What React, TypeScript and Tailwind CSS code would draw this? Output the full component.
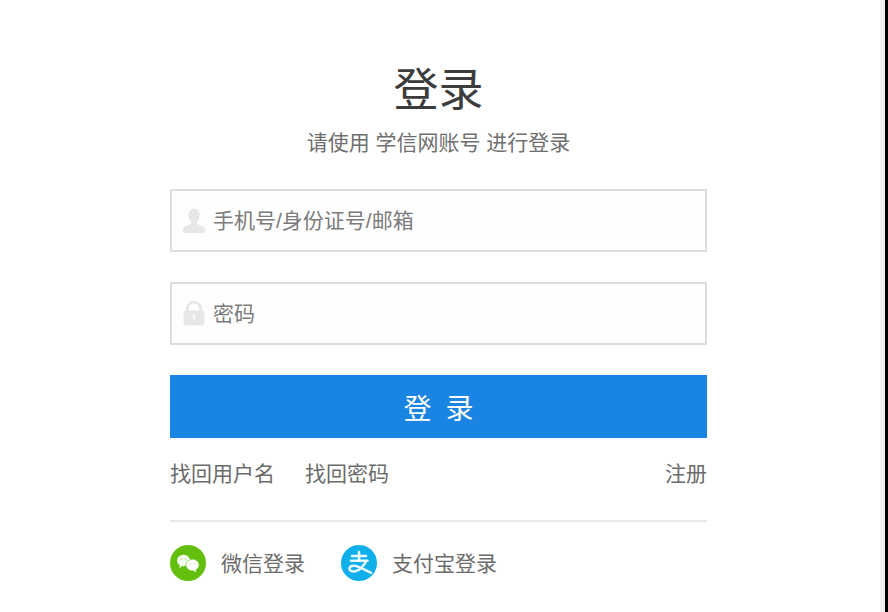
function UserIcon() {
  return (
    <svg width="22" height="25" viewBox="0 0 22 25" fill="#e7e7e7">
      <ellipse cx="11" cy="7.500" rx="5.800" ry="7" />
      <path d="M8 12h6v3c0 1 1.500 1.700 3.500 2.500 2.700 1 4.500 2 4.500 3.700V25H0v-3.800c0-1.700 1.800-2.700 4.500-3.700C6.500 16.700 8 16 8 15z" />
    </svg>
  );
}

function LockIcon() {
  return (
    <svg width="22" height="25" viewBox="0 0 22 25">
      <path
        d="M4.500 11V7.500a6.500 6.500 0 0 1 13 0V11"
        fill="none"
        stroke="#e7e7e7"
        strokeWidth="2.800"
      />
      <rect x="0.500" y="9.500" width="21" height="15" rx="3" fill="#e7e7e7" />
      <rect x="9.800" y="13.500" width="2.400" height="6" rx="1" fill="#fafafa" />
    </svg>
  );
}

function WechatIcon() {
  return (
    <svg width="36" height="36" viewBox="0 0 36 36">
      <circle cx="18" cy="18" r="18" fill="#62bf0e" />
      <ellipse cx="13.500" cy="15.500" rx="6.500" ry="5.800" fill="#f4fbee" />
      <path d="M10 19.500l-.8 3.400 3.400-2z" fill="#f4fbee" />
      <ellipse cx="22.500" cy="20" rx="6.500" ry="5.800" fill="#fff" stroke="#8fd24f" strokeWidth="0.800" />
      <path d="M25.500 24.500l1 2.700-3.400-1.700z" fill="#fff" />
      <circle cx="11.300" cy="14" r="0.900" fill="#c6e6a3" />
      <circle cx="15.700" cy="14" r="0.900" fill="#c6e6a3" />
      <circle cx="20.500" cy="19" r="0.800" fill="#c6e6a3" />
      <circle cx="24.500" cy="19" r="0.800" fill="#c6e6a3" />
    </svg>
  );
}

function AlipayIcon() {
  return (
    <svg width="36" height="36" viewBox="0 0 36 36" fill="none">
      <circle cx="18" cy="18" r="18" fill="#0fb0ea" />
      <g stroke="#fff" strokeWidth="2.500" strokeLinecap="round" strokeLinejoin="round" strokeOpacity="0.9">
        <path d="M11 11h14" />
        <path d="M18 7v8.500" />
        <path d="M10 15.800h16.500" />
        <path d="M25 16c-2 5-6.500 10-11.500 10.500-3 .3-5-.8-5-2.800 0-2 2-3.200 4.500-3 5 .3 10.500 4.500 17 7" />
      </g>
    </svg>
  );
}

function Field({ icon, label }: { icon: React.ReactNode; label: string }) {
  return (
    <div className="flex h-[63px] items-center border-2 border-[#dcdcdc] bg-[#fefefe] pl-[11px]">
      <span className="flex w-[22px] justify-center">{icon}</span>
      <span className="ml-[8px] text-[21px] text-[#7b7b7b]">{label}</span>
    </div>
  );
}

export default function App() {
  return (
    <div
      className="flex h-[612px] w-[888px] overflow-hidden bg-white"
      style={{ fontFamily: '"Liberation Sans", "Noto Sans CJK SC", sans-serif' }}
    >
      <div className="w-[880px] pt-[60px]">
        <div className="ml-[170px] w-[537px]">
          <h1 className="text-center text-[45px] leading-[62px] text-[#3c3c3c]">登录</h1>
          <p className="mt-[5px] text-center text-[21px] leading-[32px] text-[#6f6f6f]">
            请使用 学信网账号 进行登录
          </p>

          <div className="mt-[30px] flex flex-col gap-[30px]">
            <Field icon={<UserIcon />} label="手机号/身份证号/邮箱" />
            <Field icon={<LockIcon />} label="密码" />
          </div>

          <div className="mt-[30px] flex h-[63px] items-center justify-center bg-[#1a84e2] pt-[6px] text-[28px] tracking-[14px] text-white">
            <span className="ml-[14px]">登录</span>
          </div>

          <div className="mt-[21px] flex items-center text-[21px] leading-[30px] text-[#6b6b6b]">
            <span>找回用户名</span>
            <span className="ml-[30px]">找回密码</span>
            <span className="ml-auto">注册</span>
          </div>

          <div className="mt-[31px] h-[2px] bg-[#e9e9e9]" />

          <div className="mt-[23px] flex items-center text-[21px] text-[#6b6b6b]">
            <WechatIcon />
            <span className="ml-[15px] pt-[2px]">微信登录</span>
            <span className="ml-[36px]">
              <AlipayIcon />
            </span>
            <span className="ml-[15px] pt-[2px]">支付宝登录</span>
          </div>
        </div>
      </div>
      <div className="w-[5px] bg-[#efefef]" />
      <div className="w-[3px] bg-black" />
    </div>
  );
}
